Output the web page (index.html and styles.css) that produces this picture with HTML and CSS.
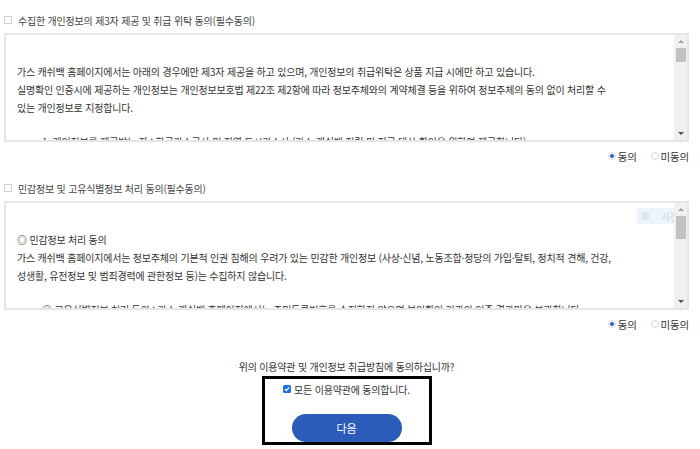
FILE: index.html
```html
<!DOCTYPE html>
<html lang="ko">
<head>
    <meta charset="UTF-8">
    <meta name="viewport" content="width=device-width, initial-scale=1.0">
    <title>약관 동의</title>
    <link rel="stylesheet" href="styles.css">
</head>
<body>
    <div class="agree-title">
        <span class="chk"></span>
        <span>수집한 개인정보의 제3자 제공 및 취급 위탁 동의(필수동의)</span>
    </div>
    <div class="terms-box">
        <div class="terms-text">
            가스 캐쉬백 홈페이지에서는 아래의 경우에만 제3자 제공을 하고 있으며, 개인정보의 취급위탁은 상품 지급 시에만 하고 있습니다.<br>
            실명확인 인증시에 제공하는 개인정보는 개인정보보호법 제22조 제2항에 따라 정보주체와의 계약체결 등을 위하여 정보주체의 동의 없이 처리할 수<br>
            있는 개인정보로 지정합니다.<br>
            <div class="indent">1. 개인정보를 제공받는 자 : 한국가스공사 및 지역 도시가스사 (가스 캐쉬백 적립 및 지급 대상 확인을 위하여 제공합니다)</div>
        </div>
        <div class="scrollbar">
            <span class="arrow up"></span>
            <span class="thumb small"></span>
            <span class="track"></span>
            <span class="arrow down"></span>
        </div>
    </div>
    <div class="radios">
        <label class="radio"><span class="dot on"></span>동의</label>
        <label class="radio"><span class="dot"></span>미동의</label>
    </div>

    <div class="agree-title second">
        <span class="chk"></span>
        <span>민감정보 및 고유식별정보 처리 동의(필수동의)</span>
    </div>
    <div class="terms-box">
        <div class="terms-text">
            ◎ 민감정보 처리 동의<br>
            가스 캐쉬백 홈페이지에서는 정보주체의 기본적 인권 침해의 우려가 있는 민감한 개인정보 (사상·신념, 노동조합·정당의 가입·탈퇴, 정치적 견해, 건강,<br>
            성생활, 유전정보 및 범죄경력에 관한정보 등)는 수집하지 않습니다.<br>
            <div class="indent">◎ 고유식별정보 처리 동의 : 가스 캐쉬백 홈페이지에서는 주민등록번호를 수집하지 않으며 본인확인 기관의 인증 결과만을 보관합니다.</div>
        </div>
        <div class="scrollbar">
            <span class="arrow up"></span>
            <span class="thumb"></span>
            <span class="track"></span>
            <span class="arrow down"></span>
        </div>
        <div class="float-tip"><span class="tip-icon"></span>사진 갑</div>
    </div>
    <div class="radios">
        <label class="radio"><span class="dot on"></span>동의</label>
        <label class="radio"><span class="dot"></span>미동의</label>
    </div>

    <p class="question">위의 이용약관 및 개인정보 취급방침에 동의하십니까?</p>
    <div class="confirm">
        <div class="all-agree">
            <svg class="chk-on" width="8" height="8" viewBox="0 0 8 8">
                <rect width="8" height="8" rx="1.5" fill="#1f6fe0"/>
                <path d="M1.8 4.1 L3.3 5.6 L6.2 2.4" fill="none" stroke="#fff" stroke-width="1.3"/>
            </svg>
            <span>모든 이용약관에 동의합니다.</span>
        </div>
        <button class="btn-next">다음</button>
    </div>
</body>
</html>
```

FILE: styles.css
```css
body {
    margin: 0;
    padding: 0 11px 0 4px;
    background-color: #fff;
    font-family: "Noto Sans CJK KR", "Noto Sans", sans-serif;
    font-size: 10px;
    letter-spacing: -0.2px;
    color: #333;
    overflow: hidden;
}
.agree-title {
    display: flex;
    align-items: center;
    gap: 6px;
    height: 18px;
    margin-top: 11px;
    margin-bottom: 4px;
    color: #444;
}
.agree-title.second {
    margin-top: 14px;
}
.chk {
    width: 8px;
    height: 8px;
    border: 1px solid #cfcfcf;
    box-sizing: border-box;
    background: #fff;
}
.terms-box {
    position: relative;
    display: flex;
    height: 109px;
    border: 2px solid #e6e6e6;
    box-sizing: border-box;
    overflow: hidden;
}
.terms-text {
    flex: 1;
    padding: 28px 11px 0 11px;
    line-height: 18px;
    white-space: nowrap;
    overflow: hidden;
    color: #333;
}
.indent {
    padding-left: 25px;
    margin-top: 16px;
}
.scrollbar {
    position: relative;
    z-index: 2;
    width: 13px;
    display: flex;
    flex-direction: column;
    align-items: center;
    background: #f0f0f0;
}
.arrow {
    height: 13px;
    width: 13px;
    display: flex;
    align-items: center;
    justify-content: center;
}
.arrow::before {
    content: "";
    border-left: 3px solid transparent;
    border-right: 3px solid transparent;
}
.arrow.up::before {
    border-bottom: 3px solid #a3a3a3;
}
.arrow.down::before {
    border-top: 3px solid #505050;
}
.thumb {
    width: 10px;
    height: 23px;
    background: #c1c1c1;
}
.thumb.small {
    height: 14px;
}
.track {
    flex: 1;
}
.float-tip {
    position: absolute;
    z-index: 1;
    top: 5px;
    left: 631px;
    width: 80px;
    height: 16px;
    display: flex;
    align-items: center;
    gap: 12px;
    padding-left: 4px;
    background: #eef4fc;
    color: #cdd7e6;
}
.tip-icon {
    width: 8px;
    height: 8px;
    border-radius: 2px;
    background: #dbe6f7;
}
.radios {
    display: flex;
    justify-content: flex-end;
    gap: 14px;
    height: 18px;
    margin-top: 5px;
    align-items: center;
    font-size: 10.5px;
}
.radio {
    display: flex;
    align-items: center;
    gap: 2px;
}
.dot {
    width: 8px;
    height: 8px;
    border: 1px solid #d6d6d6;
    border-radius: 50%;
    box-sizing: border-box;
    display: flex;
    align-items: center;
    justify-content: center;
}
.dot.on::before {
    content: "";
    width: 4px;
    height: 4px;
    border-radius: 50%;
    background: #1f5fcf;
}
.question {
    margin: 25px 0 0;
    line-height: 18px;
    text-align: center;
}
.confirm {
    width: 170px;
    margin: 0 auto;
    border: 3px solid #000;
    box-sizing: border-box;
    padding: 1px 0 0;
    display: flex;
    flex-direction: column;
    align-items: center;
    gap: 16px;
}
.all-agree {
    display: flex;
    align-items: center;
    gap: 3px;
    height: 18px;
}
.btn-next {
    width: 110px;
    height: 28px;
    border: none;
    border-radius: 14px;
    background-color: #2b5cb9;
    color: #fff;
    font-family: inherit;
    font-size: 11px;
}
```
